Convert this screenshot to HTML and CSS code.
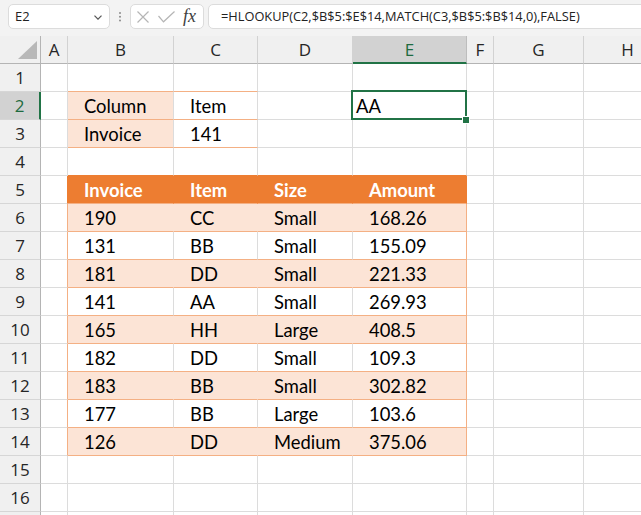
FILE: index.html
```html
<!DOCTYPE html>
<html lang="en">
<head>
<meta charset="utf-8">
<title>HLOOKUP MATCH</title>
<link rel="stylesheet" href="styles.css">
</head>
<body>
<div class="toolbar">
  <div class="namebox">
    <span>E2</span>
    <svg class="chev" width="8" height="5" viewBox="0 0 8 5"><path d="M0.5 0.7 L4 4.2 L7.5 0.7" fill="none" stroke="#555" stroke-width="1.2"/></svg>
  </div>
  <div class="dots">
    <svg width="2" height="10" viewBox="0 0 2 10"><circle cx="1" cy="1" r="1" fill="#8c8c8c"/><circle cx="1" cy="4.7" r="1" fill="#8c8c8c"/><circle cx="1" cy="8.4" r="1" fill="#8c8c8c"/></svg>
  </div>
  <div class="fnbox">
    <svg width="12" height="12" viewBox="0 0 12 12"><path d="M0.5 0.5 L11.5 11.5 M11.5 0.5 L0.5 11.5" stroke="#b5b5b5" stroke-width="1.2" fill="none"/></svg>
    <svg class="check" width="17" height="12" viewBox="0 0 17 12"><path d="M0.5 5 L5.5 10.8 L16.5 0.5" stroke="#b5b5b5" stroke-width="1.2" fill="none"/></svg>
    <span class="fx">fx</span>
  </div>
  <div class="formula">=HLOOKUP(C2,$B$5:$E$14,MATCH(C3,$B$5:$B$14,0),FALSE)</div>
</div>

<div class="sheet">
  <!-- header row -->
  <div class="corner"><svg width="19" height="18" viewBox="0 0 19 18"><path d="M0 18 L19 18 L19 0 Z" fill="#b8b8b8"/></svg></div>
  <div class="ch">A</div><div class="ch">B</div><div class="ch">C</div><div class="ch">D</div><div class="ch sel">E</div><div class="ch">F</div><div class="ch">G</div><div class="ch">H</div>

  <!-- row 1 -->
  <div class="rh">1</div><div class="c"></div><div class="c lk"></div><div class="c lk"></div><div class="c"></div><div class="c"></div><div class="c"></div><div class="c"></div><div class="c"></div>
  <!-- row 2 -->
  <div class="rh sel">2</div><div class="c"></div><div class="c lk pk in">Column</div><div class="c lk in">Item</div><div class="c"></div><div class="c active">AA</div><div class="c"></div><div class="c"></div><div class="c"></div>
  <!-- row 3 -->
  <div class="rh">3</div><div class="c"></div><div class="c lk pk in">Invoice</div><div class="c lk in">141</div><div class="c"></div><div class="c"></div><div class="c"></div><div class="c"></div><div class="c"></div>
  <!-- row 4 -->
  <div class="rh">4</div><div class="c"></div><div class="c above"></div><div class="c above"></div><div class="c above"></div><div class="c above"></div><div class="c"></div><div class="c"></div><div class="c"></div>
  <!-- row 5 -->
  <div class="rh">5</div><div class="c edge-h"></div><div class="c thd in">Invoice</div><div class="c thd in">Item</div><div class="c thd in">Size</div><div class="c thd in">Amount</div><div class="c"></div><div class="c"></div><div class="c"></div>
  <!-- row 6 -->
  <div class="rh">6</div><div class="c edge"></div><div class="c tb band in">190</div><div class="c tb band in">CC</div><div class="c tb band in">Small</div><div class="c tb band tend in">168.26</div><div class="c"></div><div class="c"></div><div class="c"></div>
  <!-- row 7 -->
  <div class="rh">7</div><div class="c edge"></div><div class="c tb in">131</div><div class="c tb in">BB</div><div class="c tb in">Small</div><div class="c tb tend in">155.09</div><div class="c"></div><div class="c"></div><div class="c"></div>
  <!-- row 8 -->
  <div class="rh">8</div><div class="c edge"></div><div class="c tb band in">181</div><div class="c tb band in">DD</div><div class="c tb band in">Small</div><div class="c tb band tend in">221.33</div><div class="c"></div><div class="c"></div><div class="c"></div>
  <!-- row 9 -->
  <div class="rh">9</div><div class="c edge"></div><div class="c tb in">141</div><div class="c tb in">AA</div><div class="c tb in">Small</div><div class="c tb tend in">269.93</div><div class="c"></div><div class="c"></div><div class="c"></div>
  <!-- row 10 -->
  <div class="rh">10</div><div class="c edge"></div><div class="c tb band in">165</div><div class="c tb band in">HH</div><div class="c tb band in">Large</div><div class="c tb band tend in">408.5</div><div class="c"></div><div class="c"></div><div class="c"></div>
  <!-- row 11 -->
  <div class="rh">11</div><div class="c edge"></div><div class="c tb in">182</div><div class="c tb in">DD</div><div class="c tb in">Small</div><div class="c tb tend in">109.3</div><div class="c"></div><div class="c"></div><div class="c"></div>
  <!-- row 12 -->
  <div class="rh">12</div><div class="c edge"></div><div class="c tb band in">183</div><div class="c tb band in">BB</div><div class="c tb band in">Small</div><div class="c tb band tend in">302.82</div><div class="c"></div><div class="c"></div><div class="c"></div>
  <!-- row 13 -->
  <div class="rh">13</div><div class="c edge"></div><div class="c tb in">177</div><div class="c tb in">BB</div><div class="c tb in">Large</div><div class="c tb tend in">103.6</div><div class="c"></div><div class="c"></div><div class="c"></div>
  <!-- row 14 -->
  <div class="rh">14</div><div class="c edge"></div><div class="c tb band in">126</div><div class="c tb band in">DD</div><div class="c tb band in">Medium</div><div class="c tb band tend in">375.06</div><div class="c"></div><div class="c"></div><div class="c"></div>
  <!-- row 15 -->
  <div class="rh">15</div><div class="c"></div><div class="c"></div><div class="c"></div><div class="c"></div><div class="c"></div><div class="c"></div><div class="c"></div><div class="c"></div>
  <!-- row 16 -->
  <div class="rh">16</div><div class="c"></div><div class="c"></div><div class="c"></div><div class="c"></div><div class="c"></div><div class="c"></div><div class="c"></div><div class="c"></div>
  <!-- row 17 (only its top edge is visible) -->
  <div class="rh"></div><div class="c"></div><div class="c"></div><div class="c"></div><div class="c"></div><div class="c"></div><div class="c"></div><div class="c"></div><div class="c"></div>
</div>
</body>
</html>
```

FILE: styles.css
```css
html, body {
  margin: 0;
  padding: 0;
}
body {
  width: 641px;
  height: 515px;
  overflow: hidden;
  background: #ffffff;
  font-family: "Lato", "Liberation Sans", sans-serif;
  color: #000;
}

/* ---------- formula bar ---------- */
.toolbar {
  height: 36px;
  box-sizing: border-box;
  background: #f3f3f3;
  display: flex;
  align-items: flex-start;
  padding: 4px 0 0 8px;
  font-family: "Open Sans", "Liberation Sans", sans-serif;
  font-size: 13px;
  color: #222;
}
.namebox {
  width: 102px;
  height: 25px;
  box-sizing: border-box;
  background: #fff;
  border: 1px solid #dcdcdc;
  border-radius: 5px;
  display: flex;
  align-items: center;
  justify-content: space-between;
  padding: 0 7px 0 6px;
  line-height: 23px;
}
.chev { margin-top: 1px; }
.dots {
  width: 20px;
  height: 25px;
  display: flex;
  align-items: center;
  justify-content: center;
}
.fnbox {
  width: 74px;
  height: 25px;
  box-sizing: border-box;
  background: #fff;
  border: 1px solid #dcdcdc;
  border-radius: 5px;
  display: flex;
  align-items: center;
  padding-left: 6px;
}
.check { margin-left: 9px; }
.fx {
  margin-left: 8px;
  font-family: "Liberation Serif", serif;
  font-style: italic;
  font-size: 18px;
  color: #404040;
  line-height: 23px;
}
.formula {
  flex: 1;
  height: 25px;
  box-sizing: border-box;
  margin-left: 4px;
  margin-right: -10px;
  background: #fff;
  border: 1px solid #dcdcdc;
  border-radius: 5px;
  padding-left: 12px;
  line-height: 23px;
  font-size: 12.8px;
  white-space: nowrap;
}

/* ---------- grid ---------- */
.sheet {
  display: grid;
  grid-template-columns: 41px 27px 106px 84px 95px 114px 27px 90px 88px;
  grid-auto-rows: 28px;
}
.sheet > div {
  box-sizing: border-box;
  white-space: nowrap;
}
.corner {
  background: #f0f0f0;
  border-right: 1px solid #b4b4b4;
  border-bottom: 1px solid #b4b4b4;
  display: flex;
  align-items: flex-end;
  justify-content: flex-end;
  padding: 0 3px 4px 0;
}
.ch {
  background: #f0f0f0;
  border-right: 1px solid #d2d2d2;
  border-bottom: 1px solid #b4b4b4;
  text-align: center;
  font-family: "Open Sans", "Liberation Sans", sans-serif;
  font-size: 17px;
  line-height: 27px;
  color: #262626;
}
.ch.sel {
  background: #d2d2d2;
  border-right-color: #bdbdbd;
  border-bottom: 2px solid #217346;
  color: #1e6b40;
}
.rh {
  background: #f0f0f0;
  border-right: 1px solid #b4b4b4;
  border-bottom: 1px solid #d6d6d6;
  text-align: center;
  font-family: "Open Sans", "Liberation Sans", sans-serif;
  font-size: 17px;
  line-height: 28px;
  color: #262626;
}
.rh.sel {
  background: #d2d2d2;
  border-right: 2px solid #217346;
  color: #1e6b40;
}
.c {
  border-right: 1px solid #dcdcdc;
  border-bottom: 1px solid #dcdcdc;
  font-size: 18.4px;
  line-height: 28px;
}
.in { padding-left: 16px; }

/* parameter block B1:C3 */
.lk { border-bottom-color: #f4b084; }
.pk { background: #fce4d6; }

/* table */
.above { border-bottom-color: #ed7d31; }
.edge-h { border-right-color: #ed7d31; }
.edge { border-right-color: #f4b084; }
.thd {
  background: #ed7d31;
  border-right-color: #ed7d31;
  border-bottom-color: #f4b084;
  color: #fff;
  font-weight: 700;
}
.tb { border-bottom-color: #f4b084; }
.band {
  background: #fce4d6;
  border-right-color: #fce4d6;
}
.tend { border-right-color: #f4b084; }

/* active cell */
.active {
  position: relative;
  padding-left: 3px;
}
.active::after {
  content: "";
  position: absolute;
  left: -2px;
  top: -2px;
  right: -1px;
  bottom: -1px;
  border: 2px solid #217346;
  z-index: 2;
}
.active::before {
  content: "";
  position: absolute;
  left: 109px;
  top: 24px;
  width: 8px;
  height: 8px;
  box-sizing: border-box;
  border: 1px solid #fff;
  background: #217346;
  z-index: 3;
}
```
